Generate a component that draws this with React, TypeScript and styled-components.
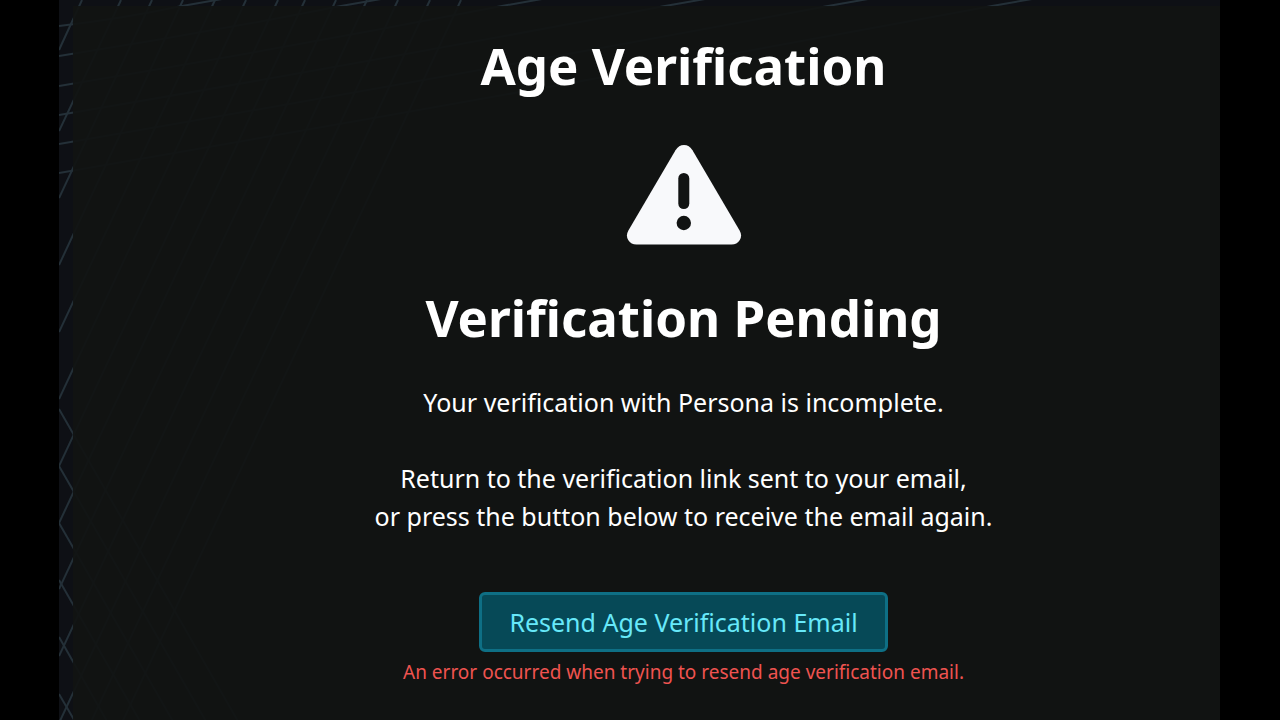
import React from "react";
import styled, { createGlobalStyle } from "styled-components";

const GlobalStyle = createGlobalStyle`
  *, *::before, *::after { box-sizing: border-box; }
  body {
    margin: 0;
    background: #000;
    color: #fff;
    font-family: "Noto Sans", sans-serif;
  }
`;

const Page = styled.div`
  display: flex;
  min-height: 100vh;
  padding: 0 60px 0 59px;
`;

const Frame = styled.div`
  position: relative;
  display: flex;
  flex: 1;
  min-width: 0;
  padding: 6px 0 0 14px;
  overflow: hidden;
  background: #0e1015;
`;

const Backdrop = styled.svg`
  position: absolute;
  top: 0;
  left: 0;
  stroke: #243038;
  stroke-width: 2;
  fill: none;
`;

const Panel = styled.main`
  position: relative;
  display: flex;
  flex: 1;
  flex-direction: column;
  align-items: center;
  padding: 24px 0 32px 74px;
  text-align: center;
  background: rgba(17, 19, 18, 0.93);
`;

const Title = styled.h1`
  margin: 0;
  font-size: 51px;
  font-weight: 700;
  line-height: 70px;
`;

const Subtitle = styled(Title).attrs({ as: "h2" })``;

const WarningIcon = styled.svg`
  width: 116px;
  height: 102px;
  margin: 44px 0 36px;
`;

const Messages = styled.div`
  margin-top: 31px;
`;

const Message = styled.p`
  margin: 0 0 38px;
  font-size: 25px;
  line-height: 38px;
`;

const ResendButton = styled.button`
  height: 60px;
  margin-top: 19px;
  padding: 0 27px;
  border: 3px solid #0e6f85;
  border-radius: 6px;
  background: #064957;
  color: #67e8f9;
  font: inherit;
  font-size: 25px;
  line-height: 38px;
  cursor: pointer;
`;

const ErrorText = styled.p`
  margin: 6px 0 0;
  color: #ef5350;
  font-size: 19px;
  line-height: 28px;
`;

const steepStarts = [50, 131, 198, 265, 332, 399, 466, 523, 589, 656, 723, 790, 857];
const shallowLines = [
  [26, 123],
  [56, 282],
  [86, 443],
  [115, 606],
  [144, 769],
  [173, 933],
];
const fallingStarts = [409, 466, 523, 580, 637, 694];

function Grid() {
  return (
    <Backdrop width="1161" height="720" viewBox="0 0 1161 720" aria-hidden="true">
      {steepStarts.map((y) => (
        <path key={y} d={`M0 ${y}L${Math.round(y / 2.13)} 0`} />
      ))}
      {shallowLines.map(([y, x]) => (
        <path key={y} d={`M0 ${y}Q${x / 2} ${y / 2 + 6} ${x} 6l40 -7`} />
      ))}
      {fallingStarts.map((y) => (
        <path key={y} d={`M0 ${y}L${Math.round((730 - y) / 1.74)} 730`} />
      ))}
    </Backdrop>
  );
}

export default function App() {
  return (
    <>
      <GlobalStyle />
      <Page>
        <Frame>
          <Grid />
          <Panel>
            <Title>Age Verification</Title>
            <WarningIcon viewBox="0 0 116 102" role="img" aria-label="Warning">
              <path
                fill="#f8f9fb"
                d="M49.5 6.2Q52.8 1 58 1T66.5 6.2L113.6 86.5Q116.5 91.6 113.8 96Q111 100.5 105.5 100.5H10.5Q5 100.5 2.2 96Q-.5 91.6 2.4 86.5Z"
              />
              <rect x="52.3" y="29" width="11" height="36" rx="5.5" fill="#111312" />
              <circle cx="57.8" cy="79" r="7.2" fill="#111312" />
            </WarningIcon>
            <Subtitle>Verification Pending</Subtitle>
            <Messages>
              <Message>Your verification with Persona is incomplete.</Message>
              <Message>
                Return to the verification link sent to your email,
                <br />
                or press the button below to receive the email again.
              </Message>
            </Messages>
            <ResendButton type="button">Resend Age Verification Email</ResendButton>
            <ErrorText role="alert">
              An error occurred when trying to resend age verification email.
            </ErrorText>
          </Panel>
        </Frame>
      </Page>
    </>
  );
}
